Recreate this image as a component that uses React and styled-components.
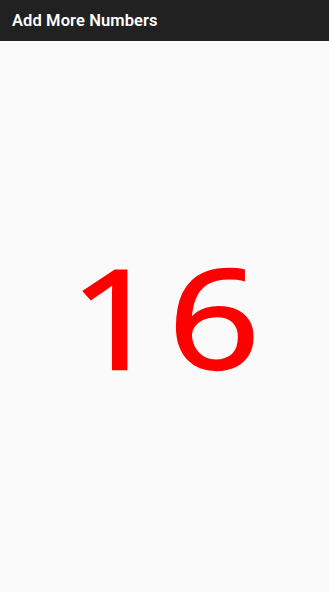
import React from 'react'
import styled, { createGlobalStyle } from 'styled-components'

const GlobalStyle = createGlobalStyle`
  html, body {
    margin: 0;
    padding: 0;
    background: #fafafa;
  }
  #root {
    min-height: 100vh;
  }
`

const Screen = styled.div`
  display: flex;
  flex-direction: column;
  height: 100vh;
  background: #fafafa;
`

const AppBar = styled.header`
  height: 41px;
  background: #212121;
  display: flex;
  align-items: center;
  padding: 0 12px;
  flex-shrink: 0;
`

const Title = styled.h1`
  margin: 0;
  color: #fff;
  font-family: Roboto, "Noto Sans", sans-serif;
  font-weight: 600;
  font-size: 16.5px;
  letter-spacing: 0.1px;
`

const Body = styled.main`
  flex: 1;
  display: flex;
  align-items: center;
  justify-content: center;
`

const Count = styled.span`
  color: ${p => p.color};
  font-family: "Open Sans", "Noto Sans", sans-serif;
  font-weight: 400;
  font-size: 137px;
  line-height: 1;
  letter-spacing: 6px;
  margin-left: 8px;
  -webkit-text-stroke: 2.4px ${p => p.color};
  transform: scaleX(1.17);
`

export default function App(){
    const total = 16

    return (
        <>
            <GlobalStyle />
            <Screen>
                <AppBar>
                    <Title>Add More Numbers</Title>
                </AppBar>
                <Body>
                    <Count color="#ff0000">{total}</Count>
                </Body>
            </Screen>
        </>
    )
}
